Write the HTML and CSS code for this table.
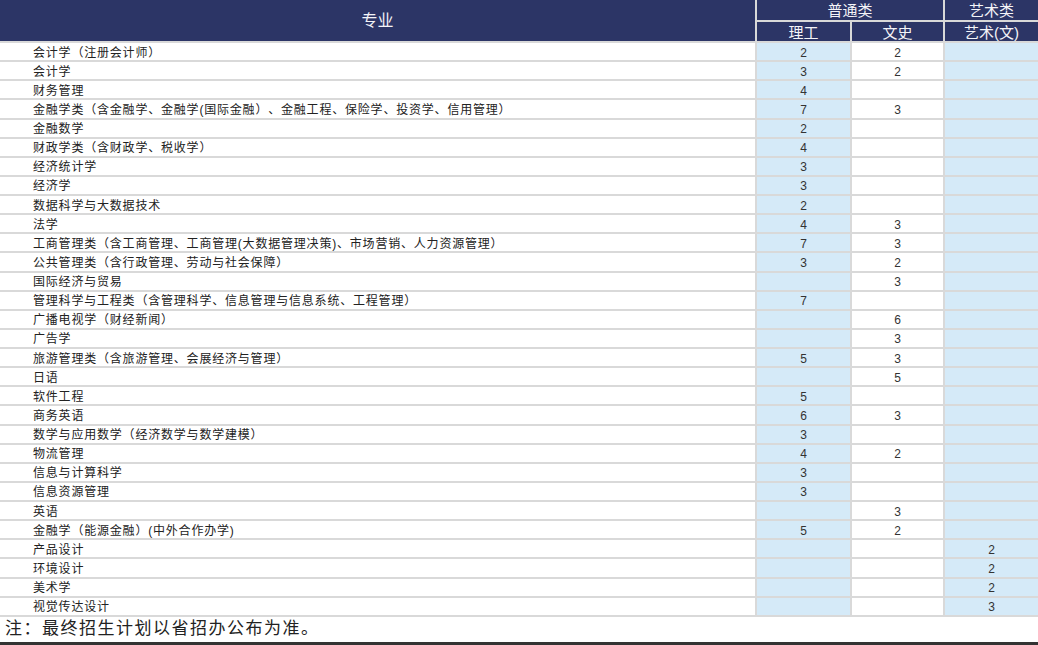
FILE: index.html
```html
<!DOCTYPE html>
<html lang="zh">
<head>
<meta charset="utf-8">
<link rel="stylesheet" href="styles.css">
</head>
<body>
<div class="plan">
  <div class="hd hd-major">专业</div>
  <div class="hd hd-group hd-normal">普通类</div>
  <div class="hd hd-group hd-art">艺术类</div>
  <div class="hd hd-sub">理工</div>
  <div class="hd hd-sub">文史</div>
  <div class="hd hd-sub">艺术(文)</div>

  <div class="c name">会计学（注册会计师）</div><div class="c sci">2</div><div class="c lib">2</div><div class="c art"></div>
  <div class="c name">会计学</div><div class="c sci">3</div><div class="c lib">2</div><div class="c art"></div>
  <div class="c name">财务管理</div><div class="c sci">4</div><div class="c lib"></div><div class="c art"></div>
  <div class="c name">金融学类（含金融学、金融学(国际金融）、金融工程、保险学、投资学、信用管理）</div><div class="c sci">7</div><div class="c lib">3</div><div class="c art"></div>
  <div class="c name">金融数学</div><div class="c sci">2</div><div class="c lib"></div><div class="c art"></div>
  <div class="c name">财政学类（含财政学、税收学）</div><div class="c sci">4</div><div class="c lib"></div><div class="c art"></div>
  <div class="c name">经济统计学</div><div class="c sci">3</div><div class="c lib"></div><div class="c art"></div>
  <div class="c name">经济学</div><div class="c sci">3</div><div class="c lib"></div><div class="c art"></div>
  <div class="c name">数据科学与大数据技术</div><div class="c sci">2</div><div class="c lib"></div><div class="c art"></div>
  <div class="c name">法学</div><div class="c sci">4</div><div class="c lib">3</div><div class="c art"></div>
  <div class="c name">工商管理类（含工商管理、工商管理(大数据管理决策)、市场营销、人力资源管理）</div><div class="c sci">7</div><div class="c lib">3</div><div class="c art"></div>
  <div class="c name">公共管理类（含行政管理、劳动与社会保障）</div><div class="c sci">3</div><div class="c lib">2</div><div class="c art"></div>
  <div class="c name">国际经济与贸易</div><div class="c sci"></div><div class="c lib">3</div><div class="c art"></div>
  <div class="c name">管理科学与工程类（含管理科学、信息管理与信息系统、工程管理）</div><div class="c sci">7</div><div class="c lib"></div><div class="c art"></div>
  <div class="c name">广播电视学（财经新闻）</div><div class="c sci"></div><div class="c lib">6</div><div class="c art"></div>
  <div class="c name">广告学</div><div class="c sci"></div><div class="c lib">3</div><div class="c art"></div>
  <div class="c name">旅游管理类（含旅游管理、会展经济与管理）</div><div class="c sci">5</div><div class="c lib">3</div><div class="c art"></div>
  <div class="c name">日语</div><div class="c sci"></div><div class="c lib">5</div><div class="c art"></div>
  <div class="c name">软件工程</div><div class="c sci">5</div><div class="c lib"></div><div class="c art"></div>
  <div class="c name">商务英语</div><div class="c sci">6</div><div class="c lib">3</div><div class="c art"></div>
  <div class="c name">数学与应用数学（经济数学与数学建模）</div><div class="c sci">3</div><div class="c lib"></div><div class="c art"></div>
  <div class="c name">物流管理</div><div class="c sci">4</div><div class="c lib">2</div><div class="c art"></div>
  <div class="c name">信息与计算科学</div><div class="c sci">3</div><div class="c lib"></div><div class="c art"></div>
  <div class="c name">信息资源管理</div><div class="c sci">3</div><div class="c lib"></div><div class="c art"></div>
  <div class="c name">英语</div><div class="c sci"></div><div class="c lib">3</div><div class="c art"></div>
  <div class="c name">金融学（能源金融）(中外合作办学)</div><div class="c sci">5</div><div class="c lib">2</div><div class="c art"></div>
  <div class="c name">产品设计</div><div class="c sci"></div><div class="c lib"></div><div class="c art">2</div>
  <div class="c name">环境设计</div><div class="c sci"></div><div class="c lib"></div><div class="c art">2</div>
  <div class="c name">美术学</div><div class="c sci"></div><div class="c lib"></div><div class="c art">2</div>
  <div class="c name">视觉传达设计</div><div class="c sci"></div><div class="c lib"></div><div class="c art">3</div>
</div>
<p class="note">注：最终招生计划以省招办公布为准。</p>
<div class="bottom-bar"></div>
</body>
</html>
```
FILE: styles.css
```css
html, body {
  margin: 0;
  padding: 0;
  background: #ffffff;
  overflow: hidden;
}
body {
  font-family: "Liberation Sans", "Noto Sans CJK SC", sans-serif;
  color: #222;
  text-spacing-trim: space-all;
  font-feature-settings: "chws" 0, "halt" 0;
}
.plan {
  display: grid;
  grid-template-columns: 755px 93px 91px 93px;
  grid-template-rows: 20px 19px repeat(30, 17.13px);
  gap: 2px;
  padding-bottom: 2px;
  background: #d9d9d9;
}
.hd {
  background: #2c3566;
  color: #f4f4f8;
  display: flex;
  align-items: center;
  justify-content: center;
  font-size: 15px;
  line-height: 1;
  padding-top: 1px;
}
.hd-major {
  grid-row: 1 / span 2;
  font-size: 16px;
}
.hd-normal {
  grid-column: 2 / span 2;
}
.c {
  background: #ffffff;
  font-size: 12px;
  line-height: 16px;
  padding-top: 1.5px;
  color: #333;
  text-align: center;
  overflow: hidden;
  white-space: nowrap;
}
.c.name {
  text-align: left;
  padding-left: 33px;
  letter-spacing: 0.8px;
  color: #222;
}
.c.sci, .c.art {
  background: #d5eaf8;
}
.note {
  margin: 0;
  height: 25px;
  padding-left: 5px;
  font-size: 17px;
  letter-spacing: 1.5px;
  line-height: 24px;
  color: #222;
}
.bottom-bar {
  height: 3px;
  background: #333333;
}
```
